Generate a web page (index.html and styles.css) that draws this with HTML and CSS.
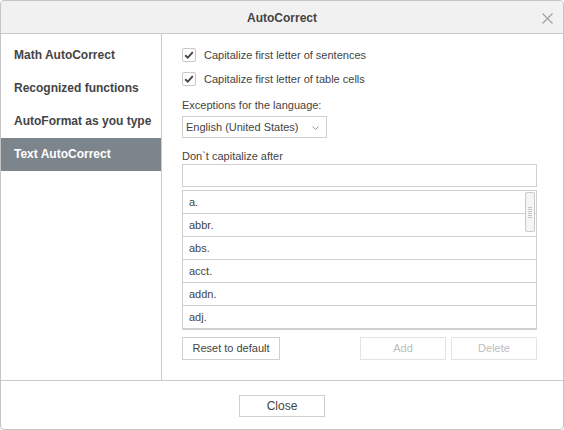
FILE: index.html
```html
<!DOCTYPE html>
<html>
<head>
<meta charset="utf-8">
<link rel="stylesheet" href="styles.css">
</head>
<body>
<div class="dialog">
  <div class="header">
    <span class="title">AutoCorrect</span>
    <svg class="close-x" width="11" height="11" viewBox="0 0 11 11"><path d="M0.5 0.5 L10.5 10.5 M10.5 0.5 L0.5 10.5" stroke="#a0a0a0" stroke-width="1.1" fill="none"/></svg>
  </div>
  <div class="body">
    <div class="sidebar">
      <div class="nav-item">Math AutoCorrect</div>
      <div class="nav-item">Recognized functions</div>
      <div class="nav-item">AutoFormat as you type</div>
      <div class="nav-item active">Text AutoCorrect</div>
    </div>
    <div class="content">
      <div class="check-row">
        <span class="checkbox"><svg width="12" height="12" viewBox="0 0 12 12"><path d="M2.2 6.2 L4.8 8.6 L9.8 3.2" stroke="#444" stroke-width="1.9" fill="none"/></svg></span>
        <span class="check-label">Capitalize first letter of sentences</span>
      </div>
      <div class="check-row second">
        <span class="checkbox"><svg width="12" height="12" viewBox="0 0 12 12"><path d="M2.2 6.2 L4.8 8.6 L9.8 3.2" stroke="#444" stroke-width="1.9" fill="none"/></svg></span>
        <span class="check-label">Capitalize first letter of table cells</span>
      </div>
      <div class="label exceptions">Exceptions for the language:</div>
      <div class="select">
        <span>English (United States)</span>
        <svg class="caret" width="7" height="4" viewBox="0 0 7 4"><path d="M0.5 0.5 L3.5 3.3 L6.5 0.5" stroke="#999" stroke-width="1" fill="none"/></svg>
      </div>
      <div class="label dont">Don`t capitalize after</div>
      <div class="input"></div>
      <div class="list">
        <div class="row">a.</div>
        <div class="row">abbr.</div>
        <div class="row">abs.</div>
        <div class="row">acct.</div>
        <div class="row">addn.</div>
        <div class="row">adj.</div>
        <div class="scrollbar"><div class="grip"></div></div>
      </div>
      <div class="buttons">
        <div class="btn reset">Reset to default</div>
        <div class="spacer"></div>
        <div class="btn disabled small">Add</div>
        <div class="btn disabled small">Delete</div>
      </div>
    </div>
  </div>
  <div class="footer">
    <div class="btn close">Close</div>
  </div>
</div>
</body>
</html>
```
FILE: styles.css
```css
* { box-sizing: border-box; }
html, body { margin: 0; padding: 0; background: #fff; }
body { font-family: "Liberation Sans", Arial, sans-serif; color: #444; font-size: 11px; }
.dialog {
  width: 564px; height: 430px;
  border: 1px solid #c4c4c4;
  border-radius: 4px;
  display: flex; flex-direction: column;
  overflow: hidden;
  background: #fff;
}
.header {
  height: 33px; flex: none;
  background: #f1f1f1;
  border-bottom: 1px solid #cbcbcb;
  display: flex; align-items: center; justify-content: center;
  position: relative;
}
.title { font-size: 12px; font-weight: bold; color: #444; line-height: 14px; margin-top: 1px; }
.close-x { position: absolute; right: 10px; top: 12px; }
.body { flex: 1; display: flex; min-height: 0; }
.sidebar {
  width: 161px; flex: none;
  border-right: 1px solid #cbcbcb;
  padding-top: 5px;
}
.nav-item {
  height: 33px; line-height: 33px;
  padding-left: 13px;
  font-size: 12px; font-weight: bold; color: #444;
}
.nav-item.active { background: #7d858c; color: #fff; }
.content { flex: 1; padding: 14px 26px 0 20px; }
.check-row { display: flex; align-items: center; height: 14px; }
.check-row.second { margin-top: 10px; }
.checkbox {
  width: 14px; height: 14px; flex: none;
  border: 1px solid #c8c8c8; border-radius: 2px;
  display: flex; align-items: center; justify-content: center;
  background: #fff;
}
.check-label { margin-left: 8px; line-height: 14px; }
.label { line-height: 13px; }
.exceptions { margin-top: 13px; }
.select {
  margin-top: 4px;
  width: 145px; height: 22px;
  border: 1px solid #cfcfcf;
  display: flex; align-items: center; justify-content: space-between;
  padding: 0 7px 0 3px;
}
.caret { margin-top: 1px; }
.dont { margin-top: 12px; }
.input {
  margin-top: 1px;
  height: 23px;
  border: 1px solid #cfcfcf;
}
.list {
  margin-top: 3px;
  border: 1px solid #cfcfcf;
  position: relative;
}
.row {
  height: 23px; line-height: 22px;
  padding-left: 6px;
  border-bottom: 1px solid #cfcfcf;
}
.row:last-of-type { border-bottom: none; height: 22px; }
.scrollbar {
  position: absolute; top: 1px; right: 1px;
  width: 10px; height: 40px;
  border: 1px solid #c9c9c9; border-radius: 2px;
  background: #f5f5f5;
  display: flex; align-items: center; justify-content: center;
}
.grip {
  width: 4px; height: 11px;
  background: repeating-linear-gradient(to bottom, #c6c6c6 0, #c6c6c6 1px, transparent 1px, transparent 2px);
}
.buttons { display: flex; margin-top: 7px; gap: 5px; }
.spacer { flex: 1; }
.btn {
  height: 23px; line-height: 21px;
  border: 1px solid #cfcfcf;
  text-align: center;
  background: #fff;
  color: #444;
}
.btn.reset { width: 98px; }
.btn.small { width: 86px; }
.btn.disabled { color: #bdbdbd; border-color: #e4e4e4; }
.footer {
  height: 49px; flex: none;
  border-top: 1px solid #cbcbcb;
  display: flex; justify-content: center;
  padding-top: 14px;
}
.btn.close { width: 86px; height: 22px; line-height: 20px; font-size: 12px; }
```
